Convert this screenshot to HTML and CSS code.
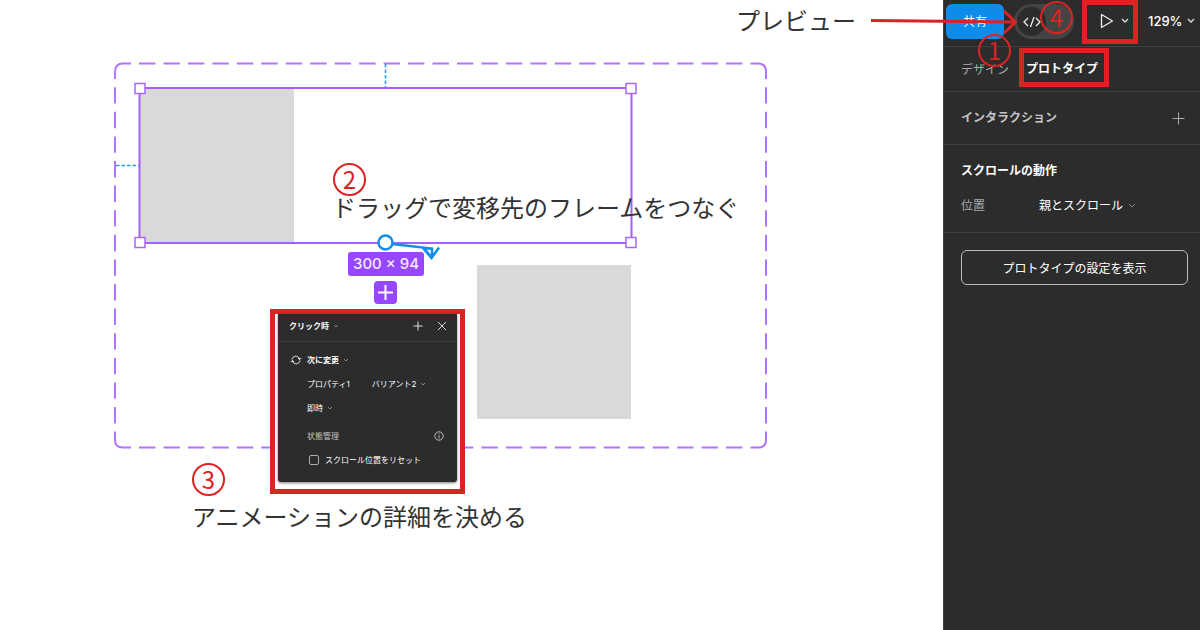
FILE: index.html
```html
<!DOCTYPE html>
<html lang="ja">
<head>
<meta charset="utf-8">
<meta name="viewport" content="width=device-width, initial-scale=1">
<title>プロトタイプの設定</title>
<link rel="stylesheet" href="styles.css">
</head>
<body>
<div class="app">
  <main class="canvas">
    <svg class="frames" width="800" height="470" viewBox="0 0 800 470" fill="none" aria-hidden="true">
      <rect x="139" y="88" width="155" height="155" fill="#d9d9d9"/>
      <rect x="477" y="265" width="154" height="154" fill="#d9d9d9"/>
      <g stroke="#a461ff" stroke-width="2">
        <path stroke="#af75ff" d="M115 79V72Q115 63.500 123 63.500H131M750.500 63.500H758Q766 63.500 766 72V79M766 432V440Q766 447.500 758 447.500H750.500M131 447.500H123Q115 447.500 115 440V432"/>
        <path stroke="#af75ff" d="M139 63.500H750M139 447.500H750" stroke-dasharray="16.400 8.060"/>
        <path stroke="#af75ff" d="M115 87.200V432M766 87.200V432" stroke-dasharray="16.400 8.200"/>
        <path d="M139.500 88H631.500V243H139.500Z"/>
      </g>
      <path d="M385.500 64V87M116 165.500H139" stroke="#1e9bf5" stroke-width="1.500" stroke-dasharray="3.500 2"/>
      <g fill="#fff" stroke="#a867ff" stroke-width="1.500">
        <rect x="135" y="83.500" width="10" height="10"/>
        <rect x="626" y="83.500" width="10" height="10"/>
        <rect x="135" y="237.500" width="10" height="10"/>
        <rect x="626" y="237.500" width="10" height="10"/>
      </g>
      <g stroke="#118eea" stroke-width="2.500">
        <path d="M392 244L432 248.500V258M423 248L431.500 258L439 247.500"/>
        <path d="M425 249H432V257Z" stroke-width="1.500"/>
        <circle cx="385.500" cy="242.500" r="7" fill="#fff"/>
      </g>
    </svg>

    <span class="size-badge">300 × 94</span>
    <button class="add-variant" type="button" aria-label="バリアントを追加">
      <svg width="23" height="23" viewBox="0 0 23 23" fill="none" stroke="#fff" stroke-width="2" aria-hidden="true"><path d="M11.500 4V19M4 11.500H19"/></svg>
    </button>

    <section class="popup-frame">
      <div class="popup">
        <header class="popup-head">
          <button class="pick strong" type="button">クリック時<svg class="chev" width="6" height="4" viewBox="0 0 6 4" aria-hidden="true"><path d="M1 1L3 3L5 1"/></svg></button>
          <div class="popup-tools">
            <button class="bare" type="button" aria-label="追加"><svg width="10" height="10" viewBox="0 0 10 10" fill="none" stroke="#ddd" aria-hidden="true"><path d="M5 .5V9.500M.5 5H9.500"/></svg></button>
            <button class="bare" type="button" aria-label="閉じる"><svg width="10" height="10" viewBox="0 0 10 10" fill="none" stroke="#ddd" aria-hidden="true"><path d="M1 1L9 9M9 1L1 9"/></svg></button>
          </div>
        </header>
        <div class="popup-body">
          <div class="action">
            <svg width="12" height="10" viewBox="0 0 12 10" fill="none" stroke="#eee" aria-hidden="true"><path d="M2 4.500C2.500 .5 8 0 9.800 4M8 3.300L9.800 4.500L11.500 2.800M10 5.500C9.500 9.500 4 10 2.200 6M4 6.700L2.200 5.500L.5 7.200"/></svg>
            <button class="pick strong" type="button">次に変更<svg class="chev" width="6" height="4" viewBox="0 0 6 4" aria-hidden="true"><path d="M1 1L3 3L5 1"/></svg></button>
          </div>
          <div class="property">
            <span>プロパティ1</span>
            <button class="pick" type="button">バリアント2<svg class="chev" width="6" height="4" viewBox="0 0 6 4" aria-hidden="true"><path d="M1 1L3 3L5 1"/></svg></button>
          </div>
          <button class="pick timing" type="button">即時<svg class="chev" width="6" height="4" viewBox="0 0 6 4" aria-hidden="true"><path d="M1 1L3 3L5 1"/></svg></button>
          <div class="state">
            <span>状態管理</span>
            <svg width="10" height="10" viewBox="0 0 10 10" fill="none" stroke="#ccc" stroke-width=".9" aria-hidden="true"><circle cx="5" cy="5" r="4.200"/><path d="M5 4.300V7.500M5 2.300V3.300"/></svg>
          </div>
          <label class="reset"><input type="checkbox">スクロール位置をリセット</label>
        </div>
      </div>
    </section>

    <p class="note note-preview">プレビュー</p>
    <span class="step step-two">2</span>
    <p class="note note-drag">ドラッグで変移先のフレームをつなぐ</p>
    <span class="step step-three">3</span>
    <p class="note note-detail">アニメーションの詳細を決める</p>
  </main>

  <aside class="sidebar">
    <div class="toolbar">
      <button class="share" type="button">共有</button>
      <button class="dev-toggle" type="button" aria-label="開発モード">
        <span class="knob"><svg width="18" height="12" viewBox="0 0 18 12" fill="none" stroke="#eee" stroke-width="1.300" aria-hidden="true"><path d="M5 2L1 6L5 10M13 2L17 6L13 10M11 1L7.500 11"/></svg></span>
      </button>
      <button class="play marked" type="button" aria-label="再生">
        <svg width="14" height="16" viewBox="0 0 14 16" fill="none" stroke="#eee" stroke-width="1.300" stroke-linejoin="round" aria-hidden="true"><path d="M1.500 1.500V14.500L12.500 8Z"/></svg>
        <svg width="8" height="6" viewBox="0 0 8 6" fill="none" stroke="#ddd" stroke-width="1.300" aria-hidden="true"><path d="M1 1L4 4L7 1"/></svg>
      </button>
      <button class="zoom" type="button">129%<svg width="8" height="6" viewBox="0 0 8 6" fill="none" stroke="#ddd" stroke-width="1.300" aria-hidden="true"><path d="M1 1L4 4L7 1"/></svg></button>
    </div>
    <nav class="tabs">
      <button class="tab" type="button">デザイン</button>
      <button class="tab current marked" type="button">プロトタイプ</button>
    </nav>
    <section class="interaction">
      <h2>インタラクション</h2>
      <button class="bare" type="button" aria-label="インタラクションを追加"><svg width="13" height="13" viewBox="0 0 13 13" fill="none" stroke="#aaa" aria-hidden="true"><path d="M6.500 .5V12.500M.5 6.500H12.500"/></svg></button>
    </section>
    <section class="scroll">
      <h2>スクロールの動作</h2>
      <div class="field">
        <span class="field-name">位置</span>
        <button class="field-value" type="button">親とスクロール<svg width="8" height="6" viewBox="0 0 8 6" fill="none" stroke="#888" aria-hidden="true"><path d="M1 1L4 4L7 1"/></svg></button>
      </div>
    </section>
    <div class="settings"><button class="show-settings" type="button">プロトタイプの設定を表示</button></div>

    <svg class="arrow" width="150" height="40" viewBox="0 0 150 40" fill="none" stroke="#db2323" stroke-width="3" aria-hidden="true"><path d="M0 20.500L144 22M133 11L144.500 22L133 33"/></svg>
    <span class="step step-one">1</span>
    <span class="step step-four">4</span>
  </aside>
</div>
</body>
</html>
```
FILE: styles.css
```css
* { box-sizing: border-box; }
body {
  margin: 0;
  background: #fff;
  color: #333;
  font-family: Inter, "Noto Sans CJK JP", sans-serif;
  font-size: 12px;
}
button {
  margin: 0;
  padding: 0;
  border: 0;
  background: none;
  color: inherit;
  font: inherit;
  white-space: nowrap;
}
h2, p { margin: 0; }
h2 { font-size: 12px; line-height: 18px; font-weight: 700; }
svg { flex: none; }

.app { display: flex; min-height: 100vh; }
.canvas { position: relative; flex: 1; min-width: 0; }
.frames { position: absolute; left: 0; top: 0; }

.size-badge {
  position: absolute;
  left: 348px;
  top: 252px;
  padding: 0 5px;
  border-radius: 3px;
  background: #9747ff;
  color: #f3e9ff;
  font-size: 15px;
  line-height: 24px;
  font-weight: 500;
  white-space: nowrap;
}
.add-variant {
  position: absolute;
  left: 374px;
  top: 281px;
  display: flex;
  border-radius: 4px;
  background: #9747ff;
}

.popup-frame {
  position: absolute;
  left: 270px;
  top: 309px;
  width: 195px;
  padding: 0 3px 7px;
  border: 5px solid #db2323;
  background: #fff;
}
.popup {
  border-radius: 0 0 3px 3px;
  background: #2c2c2c;
  box-shadow: 0 1px 3px #0008;
  color: #fff;
  font-size: 8px;
  line-height: 12px;
}
.popup-head {
  display: flex;
  align-items: center;
  justify-content: space-between;
  height: 28px;
  padding: 0 10px 4px 11px;
  border-bottom: 1px solid #3d3d3d;
}
.popup-tools { display: flex; gap: 14px; }
.bare { display: flex; }
.pick { display: flex; align-items: center; gap: 4px; }
.strong { font-weight: 700; }
.chev { fill: none; stroke: #888; stroke-width: 1; }
.popup-body {
  display: flex;
  flex-direction: column;
  align-items: flex-start;
  gap: 12px;
  padding: 12px 13px 16px 29px;
}
.action { display: flex; align-items: center; gap: 5px; margin-left: -17px; }
.property { display: flex; gap: 22px; }
.state {
  display: flex;
  align-items: center;
  justify-content: space-between;
  align-self: stretch;
  padding-top: 4px;
  color: #c4c4c4;
}
.reset { display: flex; align-items: center; gap: 6px; padding-left: 2px; }
.reset input {
  appearance: none;
  width: 10px;
  height: 10px;
  margin: 0;
  border: 1px solid #aaa;
  border-radius: 2px;
}

.note {
  position: absolute;
  font-family: "Noto Sans CJK JP", sans-serif;
  font-size: 24px;
  line-height: 36px;
  white-space: nowrap;
}
.note-preview { right: 87px; top: 2px; }
.note-drag { left: 332px; top: 189px; }
.note-detail { left: 192px; top: 498px; }
.step {
  position: absolute;
  width: 33px;
  height: 33px;
  border: 2px solid #db2323;
  border-radius: 50%;
  color: #db2323;
  font-family: "Noto Sans CJK JP", sans-serif;
  font-size: 24px;
  font-weight: 400;
  line-height: 28px;
  text-align: center;
}
.step-one { left: 34px; top: 34px; }
.step-two { left: 333px; top: 163px; }
.step-three { left: 192px; top: 463px; }
.step-four { left: 96px; top: 1px; }

.sidebar {
  position: relative;
  flex: 0 0 257px;
  border-left: 1px solid #444;
  background: #2c2c2c;
  color: #fff;
}
.marked { border: 5px solid #db2323; }
.toolbar {
  display: flex;
  height: 47px;
  padding-left: 2px;
  border-bottom: 1px solid #3f3f3f;
}
.share {
  width: 58px;
  height: 35px;
  margin-top: 4px;
  padding-bottom: 2px;
  border-radius: 6px;
  background: #0d8ceb;
}
.dev-toggle {
  display: flex;
  width: 60px;
  height: 35px;
  margin: 4px 8px 0 10px;
  padding: 3px;
  border-radius: 18px;
  background: #444;
}
.knob {
  display: flex;
  align-items: center;
  justify-content: center;
  width: 29px;
  height: 29px;
  border-radius: 50%;
  background: #2c2c2c;
}
.play {
  display: flex;
  align-items: center;
  gap: 7px;
  width: 56px;
  height: 44px;
  padding: 0 0 2px 13px;
}
.zoom {
  display: flex;
  align-items: center;
  gap: 4px;
  height: 42px;
  margin-left: 10px;
  font-size: 13px;
  font-weight: 500;
}
.tabs {
  display: flex;
  align-items: flex-start;
  height: 45px;
  padding: 1px 0 0 17px;
  border-bottom: 1px solid #3f3f3f;
}
.tab { height: 40px; color: #aaa; }
.tab.current {
  width: 90px;
  height: 39px;
  margin-left: 10px;
  padding-right: 4px;
  color: #fff;
  font-weight: 700;
}
.interaction {
  display: flex;
  align-items: center;
  justify-content: space-between;
  height: 53px;
  padding: 0 15px 0 17px;
  border-bottom: 1px solid #3f3f3f;
  color: #c4c4c4;
}
.scroll {
  height: 88px;
  padding: 17px;
  border-bottom: 1px solid #3f3f3f;
}
.field {
  display: grid;
  grid-template-columns: 78px 1fr;
  margin-top: 17px;
  line-height: 18px;
}
.field-name { color: #aaa; }
.field-value { display: flex; align-items: center; gap: 5px; }
.settings { padding: 17px 12px 0 17px; }
.show-settings {
  width: 100%;
  height: 35px;
  border: 1px solid #bbb;
  border-radius: 6px;
}
.arrow { position: absolute; left: -73px; top: 0; }
```
